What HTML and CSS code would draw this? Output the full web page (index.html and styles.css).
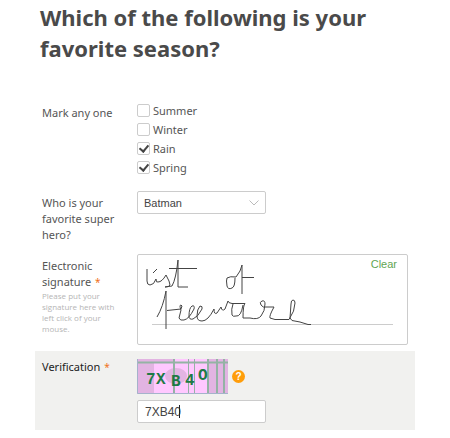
FILE: index.html
```html
<!DOCTYPE html>
<html lang="en">
<head>
  <meta charset="UTF-8" />
  <title>Season Survey</title>
  <meta name="viewport" content="width=device-width, initial-scale=1.0"/>
  <link rel="stylesheet" href="styles.css">
</head>
<body>
  <form class="survey">
    <h1>Which of the following is your favorite season?</h1>

    <div class="row" role="group" aria-labelledby="season-label">
      <div class="label" id="season-label">Mark any one</div>
      <div class="field options">
        <label><input type="checkbox" name="season" value="summer">Summer</label>
        <label><input type="checkbox" name="season" value="winter">Winter</label>
        <label><input type="checkbox" name="season" value="rain" checked>Rain</label>
        <label><input type="checkbox" name="season" value="spring" checked>Spring</label>
      </div>
    </div>

    <div class="row">
      <label class="label" for="hero">Who is your favorite super hero?</label>
      <div class="field">
        <div class="select">
          <select id="hero" name="hero">
            <option>Batman</option>
            <option>Superman</option>
          </select>
          <svg class="arrow" viewBox="0 0 10 6"><path d="M0.5 0.5 L5 5 L9.5 0.5"/></svg>
        </div>
      </div>
    </div>

    <div class="row">
      <div class="label">
        Electronic signature <span class="required">*</span>
        <small>Please put your signature here with left click of your mouse.</small>
      </div>
      <div class="field signature">
        <svg class="ink" viewBox="0 0 269 89" role="img" aria-label="Signature">
          <path class="baseline" d="M14 69.5 H255"/>
          <!-- list -->
          <path d="M9 14 V26 Q9 30 12 30 Q16 30 18 24 Q18 28 20 27 Q24 27 28 20 Q32 27 32 30 Q31 32 27 32 L34 31 Q38 24 40 5 V32 H50"/>
          <path d="M19 14 L15 18 M31 13.5 H59"/>
          <!-- of -->
          <path d="M97 23 Q97 32 94 33 Q90 35 89 31 Q88 25 89 23 Q92 21 98 22 Q103 16 104 10 V39 M104 22.5 H116"/>
          <!-- freeware -->
          <path d="M19 62 Q25 52 28 36 V74 M29 55.5 L43 54 Q45 50 43 50 Q41 50 43 55 L41 63 Q42 66 46 65 Q51 64 56 54 Q57 50 54 51 Q51 53 51 61 Q51 65 55 64 Q60 62 64 54 Q65 51 62 51 Q59 54 59 61 Q59 66 64 66 Q70 66 76 54 Q76 60 79 58 L83 52 Q84 57 87 54 L90 46 Q90 48 94 48.5 H107 Q105 50 105 63 H112 Q120 65 123 61 Q127 56 127 49 Q127 45 124 46 Q121 47 123 50 Q125 53 128 52 H136 Q131 61 132 63 L137 64.5 H151 Q157 56 157 48 Q157 45 155 45 Q153 45 153 49 L152 63 L154 65.5 L162 67 L170 69.5 H173"/>
          <path d="M95 49 Q93 54 94 60 Q95 62 98 61 Q103 62 105 50"/>
        </svg>
        <button type="button" class="clear">Clear</button>
      </div>
    </div>

    <div class="row active">
      <label class="label" for="code">Verification <span class="required">*</span></label>
      <div class="field">
        <div class="captcha">
          <svg class="picture" viewBox="0 0 91 35">
            <rect width="91" height="35" fill="#ffc8ff"/>
            <rect width="17" height="35" fill="#e2b4e2"/>
            <rect x="71" width="20" height="35" fill="#e2b4e2"/>
            <rect width="37" height="3" fill="#e2b4e2"/>
            <ellipse cx="39" cy="17" rx="11" ry="8" fill="#e2b4e2"/>
            <path d="M0 3.5 H91 M37 0 V35 M71 0 V35 M80 0 V35 M87 0 V35" stroke="#94b3a4" stroke-width="2"/>
            <path d="M51.5 0 V35 M57.5 0 V35" stroke="#94b3a4"/>
            <path d="M0.5 0 V34.5 H91" stroke="#a5b3cb" fill="none"/>
            <g class="glyphs">
              <text x="9" y="25">7</text>
              <text x="19" y="25">X</text>
              <text x="34" y="27">B</text>
              <text x="48" y="26">4</text>
              <text x="61" y="21">O</text>
            </g>
          </svg>
          <button type="button" class="help" aria-label="Help">?</button>
        </div>
        <div class="entry">
          <input type="text" id="code" name="code" value="7XB40">
          <span class="caret"></span>
        </div>
      </div>
    </div>
  </form>
</body>
</html>
```
FILE: styles.css
```css
* {
  box-sizing: border-box;
}

body {
  margin: 0;
  padding: 0 35px;
  background: #fff;
  color: #555;
  font-family: "Noto Sans", sans-serif;
  font-size: 11px;
  line-height: 16px;
}

h1 {
  margin: 0;
  padding: 2px 5px 30px;
  color: #4a4a4a;
  font-size: 22px;
  line-height: 31px;
}

.row {
  display: flex;
  gap: 15px;
  padding: 7px 7px 4px;
}

.label {
  flex: none;
  width: 80px;
  padding-top: 4px;
}

.label small {
  display: block;
  color: #b5b5b5;
  font-family: "Open Sans", sans-serif;
  font-size: 8px;
  line-height: 11px;
}

.required {
  margin-left: 1px;
  color: #f07020;
  font-size: 10px;
}

.field {
  flex: 1;
}

.options {
  padding-bottom: 3px;
}

.options label {
  display: flex;
  align-items: center;
  gap: 3px;
  height: 19px;
}

input[type="checkbox"] {
  appearance: none;
  display: grid;
  place-items: center;
  width: 13px;
  height: 13px;
  margin: 0;
  border: 1px solid #ccc;
  border-radius: 2px;
  background: #fff;
}

input[type="checkbox"]:checked::after {
  content: "";
  width: 4px;
  height: 7px;
  margin-bottom: 2px;
  border: solid #444;
  border-width: 0 2px 2px 0;
  transform: rotate(40deg);
}

.select,
.entry {
  position: relative;
  width: 129px;
}

select,
input[type="text"] {
  appearance: none;
  display: block;
  width: 100%;
  height: 23px;
  margin: 0;
  padding: 0 7px;
  border: 1px solid #ccc;
  border-radius: 2px;
  background: #fff;
  color: #444;
  font-family: "Liberation Sans", Arial, sans-serif;
  font-size: 12px;
}

select {
  padding-left: 6px;
  font-size: 11px;
}

.arrow {
  position: absolute;
  top: 9px;
  right: 7px;
  width: 10px;
  height: 6px;
  fill: none;
  stroke: #bbb;
}

.signature {
  position: relative;
  border: 1px solid #ccc;
  border-radius: 2px;
}

.ink {
  display: block;
  width: 100%;
  fill: none;
  stroke: #444;
}

.ink .baseline {
  stroke: #ccc;
}

.clear {
  position: absolute;
  top: 1px;
  right: 10px;
  padding: 0;
  border: none;
  background: none;
  color: #5fa552;
  font-family: "Liberation Sans", Arial, sans-serif;
  font-size: 11px;
  line-height: 16px;
  cursor: pointer;
}

.active {
  margin-top: 2px;
  padding: 8px 7px 7px;
  background: #f1f1ef;
  color: #222;
}

.active .label {
  padding-top: 0;
}

.captcha {
  display: flex;
  align-items: center;
  gap: 4px;
  margin-bottom: 6px;
}

.picture {
  width: 91px;
  height: 35px;
}

.glyphs {
  fill: #1d7a45;
  font-family: "Liberation Mono", monospace;
  font-size: 16px;
  font-weight: bold;
}

.help {
  width: 13px;
  height: 13px;
  padding: 0;
  border: none;
  border-radius: 50%;
  background: #ff9d0a;
  color: #fff;
  font-family: "Liberation Sans", Arial, sans-serif;
  font-size: 10px;
  font-weight: bold;
  line-height: 13px;
  cursor: pointer;
}

.caret {
  position: absolute;
  top: 5px;
  left: 42px;
  width: 1px;
  height: 13px;
  background: #222;
}
```
